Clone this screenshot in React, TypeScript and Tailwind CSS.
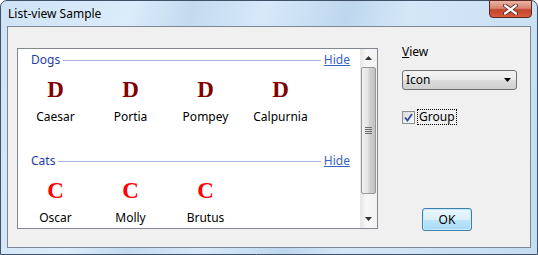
const groups = [
  { name: "Dogs", letter: "D", color: "text-[#800000]", items: ["Caesar", "Portia", "Pompey", "Calpurnia"] },
  { name: "Cats", letter: "C", color: "text-[#ff0000]", items: ["Oscar", "Molly", "Brutus"] },
]

function Scrollbar() {
  return (
    <div className="flex w-[17px] flex-col bg-[linear-gradient(90deg,#e6e6e6,#f7f7f7_40%,#f2f2f2)]">
      <div className="flex h-[18px] items-center justify-center">
        <svg width="7" height="4" viewBox="0 0 7 4">
          <path d="M3.5 0 L7 4 L0 4 Z" fill="#333" />
        </svg>
      </div>
      <div className="mx-[1px] flex h-[127px] items-center justify-center rounded-[2px] border border-[#979797] bg-[linear-gradient(90deg,#f1f1f1,#e4e4e4_45%,#cfcfcf_60%,#c2c2c2)]">
        <div className="flex flex-col gap-[1px]">
          <div className="h-[1px] w-[7px] bg-[#6b6b6b]" />
          <div className="h-[1px] w-[7px] bg-[#6b6b6b]" />
          <div className="h-[1px] w-[7px] bg-[#6b6b6b]" />
          <div className="h-[1px] w-[7px] bg-[#6b6b6b]" />
        </div>
      </div>
      <div className="flex flex-1 items-end justify-center pb-[7px]">
        <svg width="7" height="4" viewBox="0 0 7 4">
          <path d="M0 0 L7 0 L3.5 4 Z" fill="#333" />
        </svg>
      </div>
    </div>
  )
}

function Group({ group }: { group: (typeof groups)[number] }) {
  return (
    <div>
      <div className="flex h-[16px] items-center pl-[13px] pr-[10px] leading-[16px]">
        <span className="text-[#1f3ba8]">{group.name}</span>
        <div className="mx-[3px] h-[1px] flex-1 bg-[#a7b8dc]" />
        <span className="text-[#3a64c0] underline">Hide</span>
      </div>
      <div className="mt-[10px] flex">
        {group.items.map((item) => (
          <div key={item} className="flex w-[75px] flex-col items-center">
            <div className={`h-[24px] font-['Liberation_Serif',serif] text-[23px] leading-[24px] font-bold ${group.color}`}>
              {group.letter}
            </div>
            <div className="mt-[7px] leading-[16px] text-black">{item}</div>
          </div>
        ))}
      </div>
    </div>
  )
}

export default function App() {
  return (
    <div className="h-[255px] w-[538px] bg-white font-['Noto_Sans',sans-serif] text-[12px]">
      <div className="relative flex h-full w-full flex-col rounded-t-[7px] border border-[#3f5166] bg-[linear-gradient(105deg,#cfe3f6_0%,#dbecfa_22%,#c3daf0_32%,#d7e9f9_44%,#bed7ee_58%,#d4e7f7_68%,#c5dcf1_100%)]">
        <div className="flex h-[25px] items-center pl-[7px] text-[12px] text-black">List-view Sample</div>

        <div className="absolute left-[488px] top-[-1px] flex h-[18px] w-[43px] items-center justify-center rounded-b-[4px] border border-[#5a2a22] bg-[linear-gradient(180deg,#ecb3a3_0%,#d98470_45%,#c2452c_55%,#d85a3f_100%)]">
          <svg width="15" height="11" viewBox="0 0 15 11">
            <path d="M2 1.5 L13 9.5 M13 1.5 L2 9.5" stroke="#5a2a22" strokeWidth="4" strokeLinecap="round" />
            <path d="M2 1.5 L13 9.5 M13 1.5 L2 9.5" stroke="#ffffff" strokeWidth="2.2" strokeLinecap="round" />
          </svg>
        </div>

        <div className="mx-[6px] flex h-[222px] border border-[#7b8794] bg-[#f0f0f0]">
          <div className="ml-[9px] mt-[21px] flex h-[181px] w-[361px] border border-[#828790] bg-white">
            <div className="flex flex-1 flex-col gap-[28px] pt-[3px]">
              {groups.map((group) => (
                <Group key={group.name} group={group} />
              ))}
            </div>
            <Scrollbar />
          </div>

          <div className="ml-[24px] flex w-[115px] flex-col">
            <div className="mt-[17px] leading-[16px] text-black">
              <span className="underline">V</span>iew
            </div>
            <div className="mt-[10px] flex h-[20px] items-center justify-between rounded-[3px] border border-[#707070] bg-[linear-gradient(180deg,#f3f3f3_0%,#ebebeb_50%,#dddddd_51%,#cfcfcf_100%)] pl-[3px] pr-[5px]">
              <span className="text-black">Icon</span>
              <svg width="7" height="4" viewBox="0 0 7 4">
                <path d="M0 0 L7 0 L3.5 4 Z" fill="#000" />
              </svg>
            </div>
            <div className="mt-[19px] flex items-center">
              <div className="flex h-[13px] w-[13px] items-center justify-center border border-[#8e8f8f] bg-[linear-gradient(135deg,#dcdcdc,#fafafa)]">
                <svg width="9" height="9" viewBox="0 0 9 9">
                  <path d="M1 4.5 L3.5 7.5 L8 1" stroke="#2d4f9a" strokeWidth="1.8" fill="none" />
                </svg>
              </div>
              <div className="ml-[2px] border border-dotted border-black px-[1px] leading-[14px] text-black">
                Group
              </div>
            </div>
            <div className="mb-[16px] ml-[20px] mt-auto flex h-[23px] w-[50px] items-center justify-center rounded-[3px] border border-[#3c7fb1] bg-[linear-gradient(180deg,#eaf6fd_0%,#d9f0fc_50%,#bee6fd_51%,#a7d9f5_100%)] text-black shadow-[inset_0_0_0_1px_#c8ecfc]">
              OK
            </div>
          </div>
        </div>
      </div>
    </div>
  )
}
